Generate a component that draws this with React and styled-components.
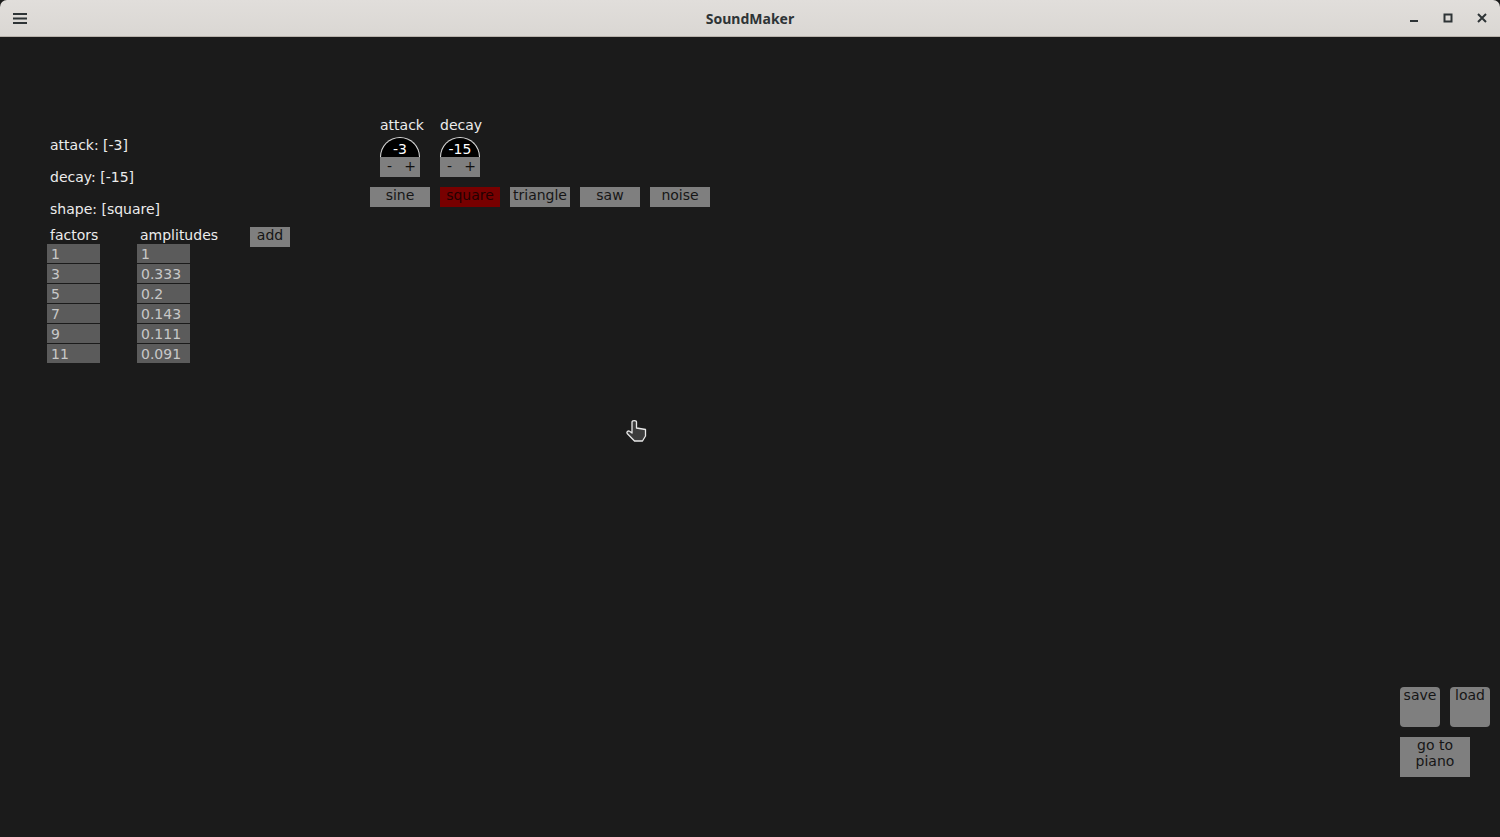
import React from "react";
import styled, { createGlobalStyle } from "styled-components";

const Global = createGlobalStyle`
  html, body { margin: 0; padding: 0; background: #1b1b1b; }
  body { font-family: "DejaVu Sans", "Liberation Sans", sans-serif; font-size: 14px; }
  * { box-sizing: border-box; }
`;

const Window = styled.div`
  width: 1500px;
  height: 837px;
  display: flex;
  flex-direction: column;
  background: #1b1b1b;
  overflow: hidden;
  position: relative;
`;

const TitleBar = styled.header`
  height: 37px;
  flex: none;
  display: flex;
  align-items: center;
  justify-content: space-between;
  background: linear-gradient(#e1dedb, #dad7d3);
  border-bottom: 1px solid #b8b2ab;
  border-radius: 7px 7px 0 0;
  padding: 0 9px 0 11px;
`;

const Title = styled.div`
  font-family: "Noto Sans", "DejaVu Sans", sans-serif;
  font-weight: 700;
  font-size: 14px;
  color: #2e3436;
  position: absolute;
  left: 0;
  right: 0;
  top: 9px;
  text-align: center;
  pointer-events: none;
`;

const WinButtons = styled.div`
  display: flex;
  align-items: center;
  gap: 16px;
`;

const IconBtn = styled.div`
  width: 18px;
  height: 18px;
  display: flex;
  align-items: center;
  justify-content: center;
`;

const Main = styled.main`
  flex: 1;
  display: flex;
  flex-direction: column;
  padding: 0 10px 60px 47px;
`;

const TopRow = styled.div`
  display: flex;
  align-items: flex-start;
`;

const LeftPanel = styled.section`
  width: 323px;
  padding-top: 99px;
  color: #ececec;
`;

const InfoLine = styled.div`
  line-height: 18px;
  height: 18px;
  padding-left: 3px;
  margin-bottom: ${(p) => (p.$last ? "8px" : "14px")};
  white-space: nowrap;
`;

const TableHead = styled.div`
  display: flex;
  height: 18px;
  line-height: 18px;
`;

const HeadCell = styled.div`
  width: ${(p) => p.$w}px;
  padding-left: 3px;
  white-space: nowrap;
`;

const AddButton = styled.div`
  width: 40px;
  height: 20px;
  margin-top: 1px;
  background: #7f7f7f;
  color: #151515;
  text-align: center;
  line-height: 17px;
`;

const TableRow = styled.div`
  display: flex;
  margin-bottom: 1px;
`;

const Cell = styled.div`
  width: 53px;
  height: 19px;
  line-height: 20px;
  background: #5b5b5b;
  color: #c8c8c8;
  padding-left: 4px;
  margin-right: ${(p) => p.$mr || 0}px;
`;

const Controls = styled.section`
  padding-top: 79px;
  display: flex;
  flex-direction: column;
`;

const KnobRow = styled.div`
  display: flex;
  padding-left: 10px;
`;

const KnobUnit = styled.div`
  width: 60px;
  display: flex;
  flex-direction: column;
  align-items: flex-start;
`;

const KnobLabel = styled.div`
  color: #ececec;
  line-height: 18px;
  height: 18px;
  margin-bottom: 3px;
`;

const KnobDial = styled.div`
  width: 40px;
  height: 20px;
  background: #000;
  border: 1px solid #d8d8d8;
  border-bottom: none;
  border-radius: 20px 20px 0 0;
  color: #fff;
  text-align: center;
  padding-top: 2px;
  line-height: 18px;
`;

const KnobSteps = styled.div`
  width: 40px;
  height: 20px;
  background: #7f7f7f;
  color: #111;
  display: flex;
  justify-content: space-between;
  padding: 0 4px 0 7px;
  line-height: 18px;
`;

const ShapeRow = styled.div`
  display: flex;
  gap: 10px;
  margin-top: 10px;
`;

const ShapeButton = styled.div`
  width: 60px;
  height: 20px;
  background: ${(p) => (p.$active ? "#780000" : "#7f7f7f")};
  color: ${(p) => (p.$active ? "#230000" : "#161616")};
  text-align: center;
  line-height: 17px;
  white-space: nowrap;
`;

const BottomPanel = styled.div`
  margin-top: auto;
  align-self: flex-end;
  width: 90px;
  display: flex;
  flex-wrap: wrap;
  gap: 10px;
`;

const FileButton = styled.div`
  width: ${(p) => p.$w}px;
  height: 40px;
  background: #7f7f7f;
  color: #161616;
  border-radius: ${(p) => (p.$round ? "4px" : "0")};
  text-align: center;
  line-height: 16px;
`;

const Cursor = styled.svg`
  position: absolute;
  left: 626px;
  top: 419px;
`;

const factors = [
  ["1", "1"],
  ["3", "0.333"],
  ["5", "0.2"],
  ["7", "0.143"],
  ["9", "0.111"],
  ["11", "0.091"],
];

const shapes = ["sine", "square", "triangle", "saw", "noise"];

function Knob({ label, value }) {
  return (
    <KnobUnit>
      <KnobLabel>{label}</KnobLabel>
      <KnobDial>{value}</KnobDial>
      <KnobSteps>
        <span>-</span>
        <span>+</span>
      </KnobSteps>
    </KnobUnit>
  );
}

export default function App() {
  return (
    <>
      <Global />
      <Window>
        <TitleBar>
          <IconBtn>
            <svg width="14" height="12" viewBox="0 0 14 12">
              <rect x="0" y="1" width="14" height="2" fill="#2e3436" />
              <rect x="0" y="5.5" width="14" height="2" fill="#2e3436" />
              <rect x="0" y="10" width="14" height="2" fill="#2e3436" />
            </svg>
          </IconBtn>
          <Title>SoundMaker</Title>
          <WinButtons>
            <IconBtn>
              <svg width="10" height="10" viewBox="0 0 10 10">
                <rect x="1" y="7" width="8" height="2" fill="#2e3436" />
              </svg>
            </IconBtn>
            <IconBtn>
              <svg width="10" height="10" viewBox="0 0 10 10">
                <rect x="1.5" y="1.5" width="7" height="7" fill="none" stroke="#2e3436" strokeWidth="2" />
              </svg>
            </IconBtn>
            <IconBtn>
              <svg width="10" height="10" viewBox="0 0 10 10">
                <path d="M1 1 L9 9 M9 1 L1 9" stroke="#2e3436" strokeWidth="2" />
              </svg>
            </IconBtn>
          </WinButtons>
        </TitleBar>
        <Main>
          <TopRow>
            <LeftPanel>
              <InfoLine>attack: [-3]</InfoLine>
              <InfoLine>decay: [-15]</InfoLine>
              <InfoLine $last>shape: [square]</InfoLine>
              <TableHead>
                <HeadCell $w={90}>factors</HeadCell>
                <HeadCell $w={113}>amplitudes</HeadCell>
                <AddButton>add</AddButton>
              </TableHead>
              {factors.map(([f, a]) => (
                <TableRow key={f}>
                  <Cell $mr={37}>{f}</Cell>
                  <Cell>{a}</Cell>
                </TableRow>
              ))}
            </LeftPanel>
            <Controls>
              <KnobRow>
                <Knob label="attack" value="-3" />
                <Knob label="decay" value="-15" />
              </KnobRow>
              <ShapeRow>
                {shapes.map((s) => (
                  <ShapeButton key={s} $active={s === "square"}>
                    {s}
                  </ShapeButton>
                ))}
              </ShapeRow>
            </Controls>
          </TopRow>
          <BottomPanel>
            <FileButton $w={40} $round>save</FileButton>
            <FileButton $w={40} $round>load</FileButton>
            <FileButton $w={70}>
              go to
              <br />
              piano
            </FileButton>
          </BottomPanel>
        </Main>
        <Cursor width="22" height="24" viewBox="0 0 22 24">
          <path
            d="M6 3 C6 1.2 10.5 1.2 10.5 3 L10.5 9 L19.5 10.5 L19.5 17 L16.5 22 L8.5 22 L1.2 14.5 C0.3 13 2 11.3 3.6 12.3 L6 14 Z"
            fill="#3c3c3c"
            stroke="#e8e8e8"
            strokeWidth="1.3"
            strokeLinejoin="round"
          />
        </Cursor>
      </Window>
    </>
  );
}
